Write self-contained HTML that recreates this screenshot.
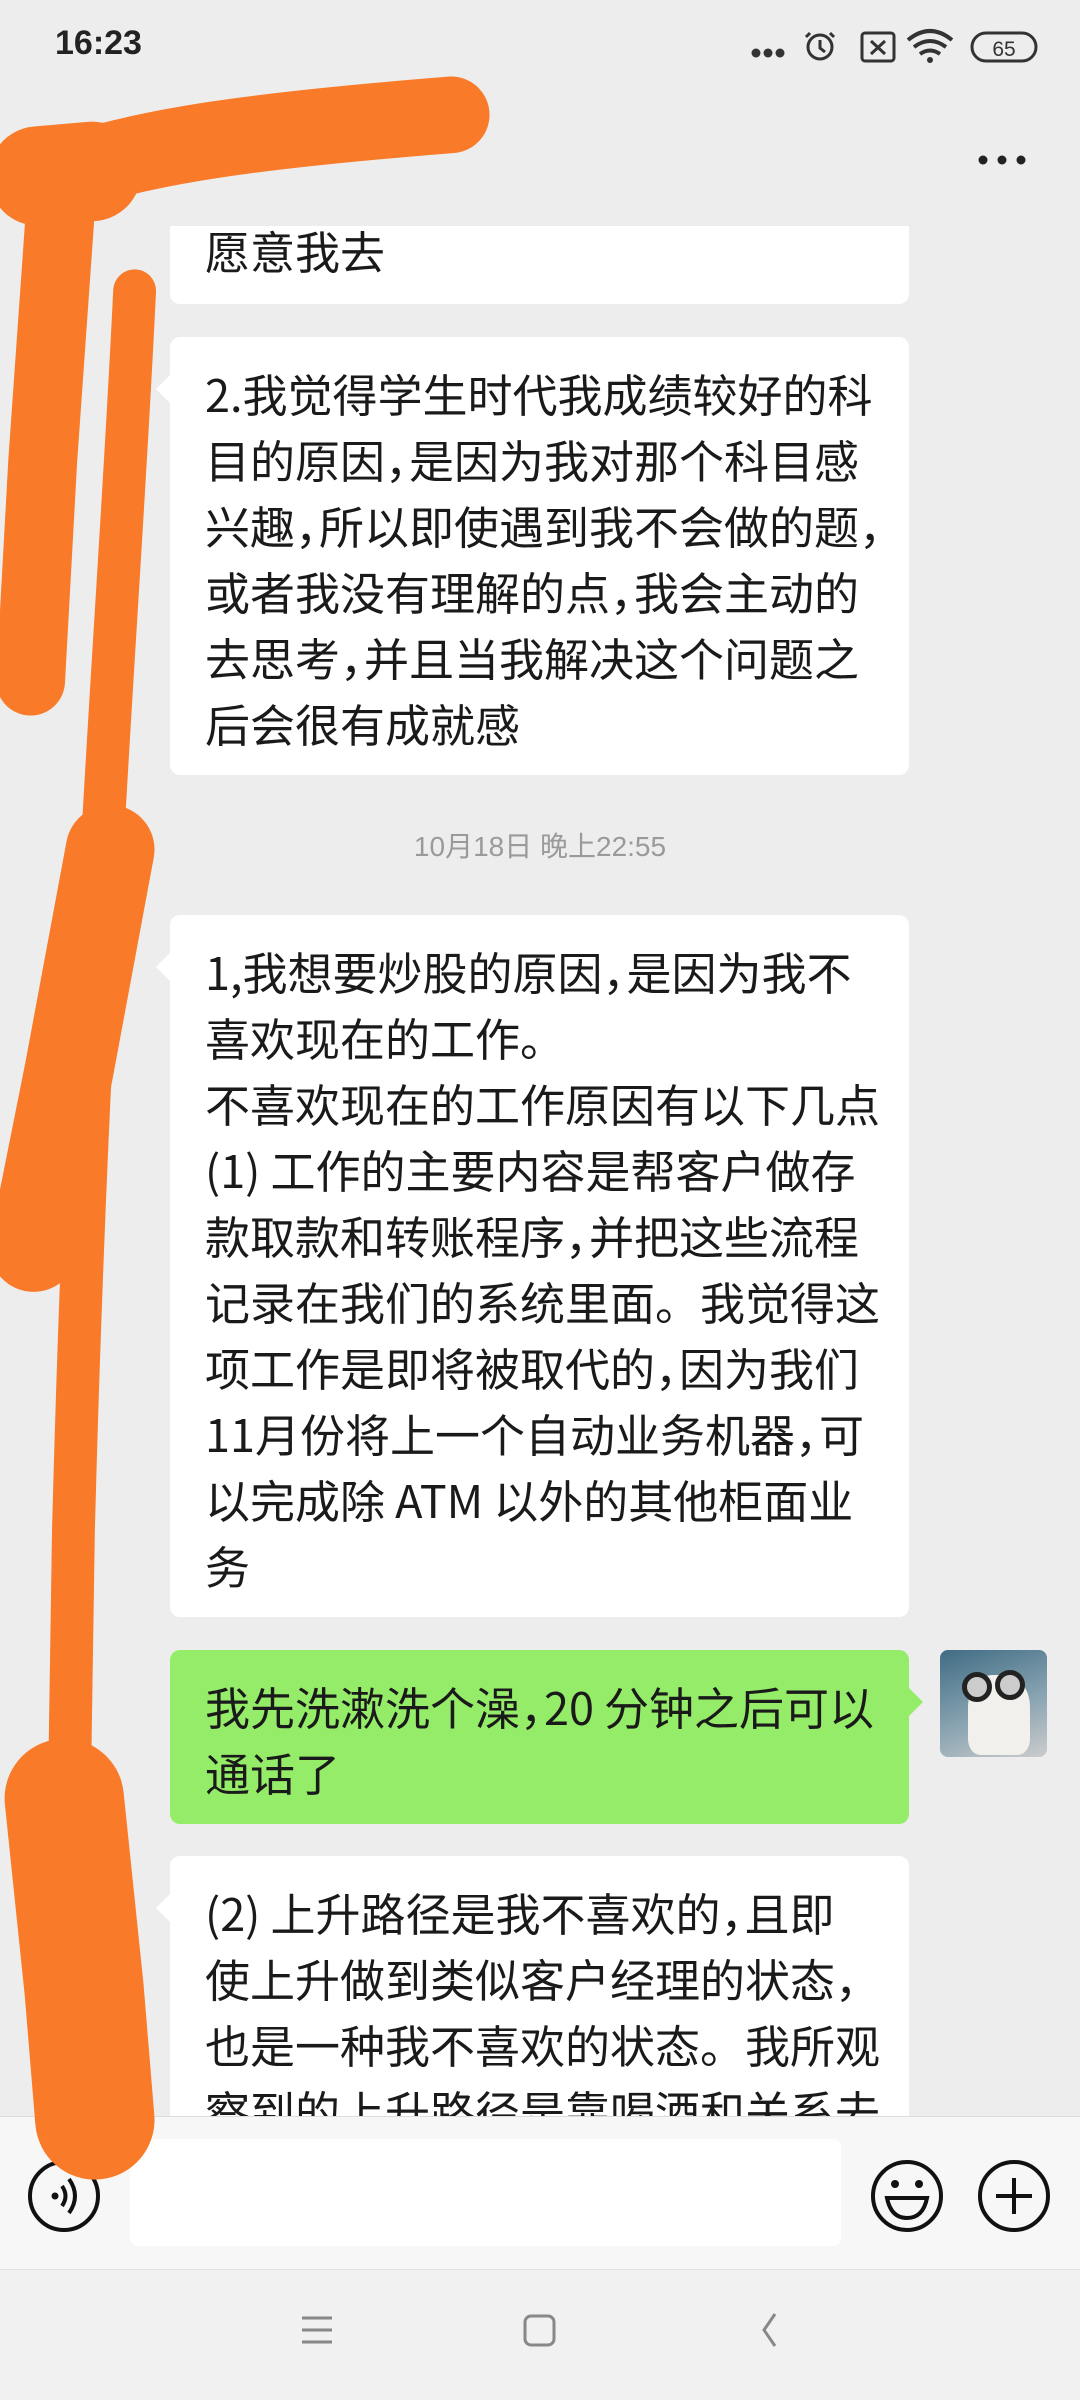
<!DOCTYPE html>
<html><head><meta charset="utf-8"><style>
*{margin:0;padding:0;box-sizing:border-box}
body{width:1080px;height:2400px;background:#ededed;position:relative;overflow:hidden;font-family:"Liberation Sans","Noto Sans CJK SC",sans-serif;color:#1a1a1a}
.b{position:absolute;left:170px;width:739px;background:#fff;border-radius:10px;padding:23px 0 19px 35px;font-size:45px;line-height:66px;white-space:nowrap;font-family:"Noto Sans CJK SC",sans-serif}
.b.t:before{content:"";position:absolute;left:-14px;top:38px;border:14px solid transparent;border-left:0;border-right-color:#fff}
.g{background:#95ec69}
.g:after{content:"";position:absolute;right:-14px;top:38px;border:14px solid transparent;border-right:0;border-left-color:#95ec69}
.c{display:inline-block;width:24px;overflow:hidden;vertical-align:top}
.ts{position:absolute;width:1080px;text-align:center;font-size:28px;color:#9a9a9a}
</style></head><body>
<div style="position:absolute;left:55px;top:24px;font-size:34px;font-weight:bold;color:#222">16:23</div>
<svg style="position:absolute;left:750px;top:25px" width="300" height="45" viewBox="0 0 300 45">
<circle cx="6" cy="28" r="4.5" fill="#333"/><circle cx="18" cy="28" r="4.5" fill="#333"/><circle cx="30" cy="28" r="4.5" fill="#333"/>
<circle cx="70" cy="22" r="12" fill="none" stroke="#333" stroke-width="3"/><path d="M70 15v8l5 4M60 8l-4 4M80 8l4 4" stroke="#333" stroke-width="3" fill="none"/>
<rect x="112" y="8" width="32" height="28" rx="3" fill="none" stroke="#333" stroke-width="3"/><path d="M121 16l14 13M135 16l-14 13" stroke="#333" stroke-width="3"/>
<path d="M158 15q22-18 44 0M164 22q16-12 32 0M170 29q10-7 20 0" stroke="#333" stroke-width="4" fill="none"/><circle cx="180" cy="35" r="3" fill="#333"/>
<rect x="222" y="8" width="64" height="28" rx="14" fill="none" stroke="#333" stroke-width="3"/>
<text x="254" y="31" font-size="21" text-anchor="middle" fill="#333" font-family="Liberation Sans">65</text>
</svg>
<svg style="position:absolute;left:975px;top:150px" width="60" height="20"><circle cx="8" cy="10" r="4.5" fill="#222"/><circle cx="27" cy="10" r="4.5" fill="#222"/><circle cx="46" cy="10" r="4.5" fill="#222"/></svg>
<div style="position:absolute;top:226px;left:0;width:1080px;height:1890px;overflow:hidden">
<div class="b" style="top:-29px;height:107px;padding-top:20px">愿意我去</div>
<div class="b t" style="top:111px">2.我觉得学生时代我成绩较好的科<br>目的原因<span class="c">，</span>是因为我对那个科目感<br>兴趣<span class="c">，</span>所以即使遇到我不会做的题<span class="c">，</span><br>或者我没有理解的点<span class="c">，</span>我会主动的<br>去思考<span class="c">，</span>并且当我解决这个问题之<br>后会很有成就感</div>
<div class="ts" style="top:599px">10月18日 晚上22:55</div>
<div class="b t" style="top:689px">1,我想要炒股的原因<span class="c">，</span>是因为我不<br>喜欢现在的工作。<br>不喜欢现在的工作原因有以下几点<br>(1) 工作的主要内容是帮客户做存<br>款取款和转账程序<span class="c">，</span>并把这些流程<br>记录在我们的系统里面。我觉得这<br>项工作是即将被取代的<span class="c">，</span>因为我们<br>11月份将上一个自动业务机器<span class="c">，</span>可<br>以完成除 ATM 以外的其他柜面业<br>务</div>
<div class="b g" style="top:1424px">我先洗漱洗个澡<span class="c">，</span>20 分钟之后可以<br>通话了</div>
<div style="position:absolute;left:940px;top:1424px;width:107px;height:107px;border-radius:8px;background:linear-gradient(160deg,#3f6c84,#8ea7b4 60%,#ccc);overflow:hidden"><div style="position:absolute;left:28px;top:25px;width:62px;height:80px;border-radius:40% 40% 20% 20%;background:#f2f0ec"></div><div style="position:absolute;left:22px;top:22px;width:30px;height:30px;border-radius:50%;border:5px solid #222;background:#ccc"></div><div style="position:absolute;left:55px;top:20px;width:30px;height:30px;border-radius:50%;border:5px solid #222;background:#ccc"></div></div>
<div class="b t" style="top:1630px;height:400px">(2) 上升路径是我不喜欢的<span class="c">，</span>且即<br>使上升做到类似客户经理的状态<span class="c">，</span><br>也是一种我不喜欢的状态。我所观<br>察到的上升路径是靠喝酒和关系去</div>
</div>
<div style="position:absolute;top:2116px;left:0;width:1080px;height:153px;background:#f7f7f7;border-top:1px solid #ddd"></div>
<div style="position:absolute;left:130px;top:2139px;width:711px;height:107px;background:#fff;border-radius:8px"></div>
<svg style="position:absolute;left:0;top:2140px" width="1080" height="115">
<circle cx="64" cy="56" r="34" fill="none" stroke="#111" stroke-width="4"/>
<circle cx="55" cy="56" r="3.5" fill="#111"/><path d="M62 46q7 10 0 20M69 39q12 17 0 34" stroke="#111" stroke-width="4" fill="none"/>
<circle cx="907" cy="56" r="34" fill="none" stroke="#111" stroke-width="4"/>
<circle cx="895" cy="44" r="4" fill="#111"/><circle cx="919" cy="44" r="4" fill="#111"/><path d="M887 58h40q-4 20-20 20t-20-20z" fill="none" stroke="#111" stroke-width="4"/>
<circle cx="1014" cy="56" r="34" fill="none" stroke="#111" stroke-width="4"/><path d="M1014 38v36M996 56h36" stroke="#111" stroke-width="4"/>
</svg>
<div style="position:absolute;top:2269px;left:0;width:1080px;height:131px;background:#f1f1f1;border-top:1px solid #e2e2e2"></div>
<svg style="position:absolute;left:0;top:2300px" width="1080" height="60">
<path d="M302 18h30M302 30h30M302 42h30" stroke="#888" stroke-width="3"/>
<rect x="525" y="16" width="29" height="29" rx="6" fill="none" stroke="#888" stroke-width="3"/>
<path d="M775 14l-11 16l11 16" stroke="#888" stroke-width="3" fill="none"/>
</svg>
<svg style="position:absolute;left:0;top:0" width="1080" height="2400" viewBox="0 0 706 1568" preserveAspectRatio="none">
<g stroke="#f97a28" fill="none" stroke-linecap="round" stroke-linejoin="round">
<path d="M30,118 C90,95 170,85 295,75" stroke-width="50"/>
<path d="M25,115 L60,112" stroke-width="65"/>
<path d="M40,130 L28,300 L20,445" stroke-width="45"/>
<path d="M88,190 C78,400 58,620 48,1000 L42,1390" stroke-width="28"/>
<path d="M72,555 L45,700 L22,815" stroke-width="58"/>
<path d="M42,1175 L55,1300 L62,1385" stroke-width="78"/>
</g></svg>
</body></html>
